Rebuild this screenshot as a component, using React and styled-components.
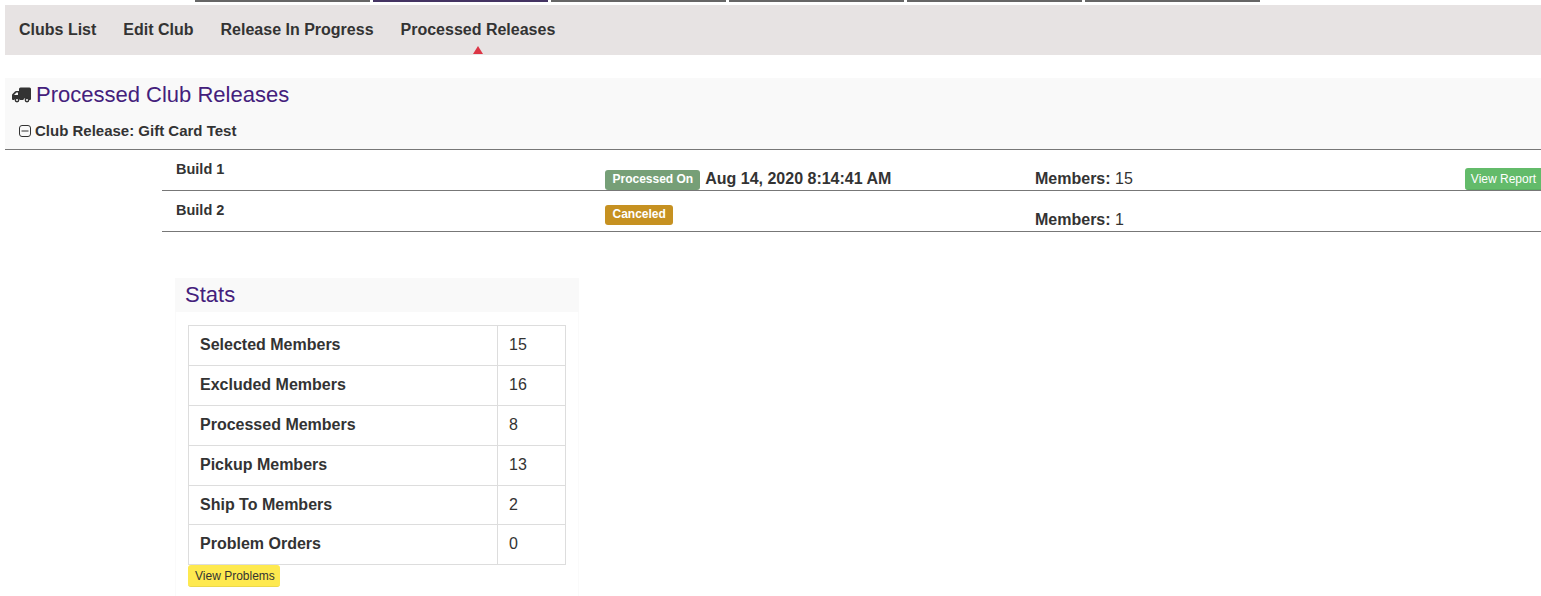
import styled, { createGlobalStyle } from "styled-components";

const tabs = [false, true, false, false, false, false];
const navItems = ["Clubs List", "Edit Club", "Release In Progress", "Processed Releases"];
const stats = [
  ["Selected Members", 15],
  ["Excluded Members", 16],
  ["Processed Members", 8],
  ["Pickup Members", 13],
  ["Ship To Members", 2],
  ["Problem Orders", 0],
];

const App = () => {
  return (
    <Page>
      <GlobalStyle />
      <TopTabs>
        {tabs.map((active, i) => (
          <TopTab key={i} $active={active} />
        ))}
      </TopTabs>

      <NavBar>
        {navItems.map((item, i) => (
          <NavItem key={item} $active={i === navItems.length - 1}>
            {item}
          </NavItem>
        ))}
      </NavBar>

      <SectionHeader>
        <SectionTitle>
          <TruckIcon viewBox="0 0 19 16">
            <path
              fill="#333"
              d="M8.5 0.5h9a1.5 1.5 0 0 1 1.5 1.5v10a1 1 0 0 1-1 1h-1.2a3 3 0 0 0-5.6 0H7.8a3 3 0 0 0-5.6 0H1a1 1 0 0 1-1-1V8.2a1.5 1.5 0 0 1 .5-1.1L3 4.4A1.5 1.5 0 0 1 4.1 4H7V2a1.5 1.5 0 0 1 1.5-1.5z"
            />
            <path fill="#f9f9f9" d="M2 8l2.4-2.4H6V8z" />
            <circle cx="5" cy="13" r="2.4" fill="#333" />
            <circle cx="5" cy="13" r="1" fill="#f9f9f9" />
            <circle cx="15" cy="13" r="2.4" fill="#333" />
            <circle cx="15" cy="13" r="1" fill="#f9f9f9" />
          </TruckIcon>
          Processed Club Releases
        </SectionTitle>
        <ReleaseTitle>
          <MinusIcon viewBox="0 0 12 12">
            <rect x="0.5" y="0.5" width="11" height="11" rx="2.5" fill="none" stroke="#333" />
            <path d="M2.5 6h7" stroke="#333" fill="none" />
          </MinusIcon>
          Club Release: Gift Card Test
        </ReleaseTitle>
      </SectionHeader>

      <Builds>
        <BuildRow>
          <BuildName>Build 1</BuildName>
          <StatusCell>
            <Badge $color="#769f77">Processed On</Badge>
            <ProcessedDate>Aug 14, 2020 8:14:41 AM</ProcessedDate>
          </StatusCell>
          <Members>
            <strong>Members:</strong> 15
          </Members>
          <ReportButton>View Report</ReportButton>
        </BuildRow>
        <BuildRow>
          <BuildName>Build 2</BuildName>
          <StatusCell>
            <Badge $color="#c69121" $raised>
              Canceled
            </Badge>
          </StatusCell>
          <Members>
            <strong>Members:</strong> 1
          </Members>
        </BuildRow>
      </Builds>

      <StatsPanel>
        <StatsTitle>Stats</StatsTitle>
        <StatsBody>
          <StatsTable>
            <tbody>
              {stats.map(([label, value]) => (
                <tr key={label}>
                  <StatLabel>{label}</StatLabel>
                  <StatValue>{value}</StatValue>
                </tr>
              ))}
            </tbody>
          </StatsTable>
          <ProblemsButton>View Problems</ProblemsButton>
        </StatsBody>
      </StatsPanel>
    </Page>
  );
};

const GlobalStyle = createGlobalStyle`
  html, body {
    margin: 0;
    padding: 0;
    background: #fff;
    overflow: hidden;
  }

  body {
    font-family: "Liberation Sans", Arial, sans-serif;
    color: #333;
  }
`;

const Page = styled.div`
  width: 1541px;
  height: 596px;
  overflow: hidden;
`;

const TopTabs = styled.div`
  display: flex;
  gap: 3px;
  height: 2px;
  padding-left: 195px;
`;

const TopTab = styled.div`
  width: 175px;
  background-color: ${(props) => (props.$active ? "#453463" : "#666")};
`;

const NavBar = styled.nav`
  margin: 3px 0 0 5px;
  height: 50px;
  background-color: #e7e3e3;
  display: flex;
  gap: 27px;
  padding-left: 14px;
`;

const NavItem = styled.div`
  position: relative;
  font-size: 16px;
  font-weight: 700;
  line-height: 50px;
  color: #333;

  ${(props) =>
    props.$active &&
    `
    &::after {
      content: "";
      position: absolute;
      left: 50%;
      bottom: 1px;
      margin-left: -5px;
      border-left: 5px solid transparent;
      border-right: 5px solid transparent;
      border-bottom: 8px solid #dc3545;
    }
  `}
`;

const SectionHeader = styled.header`
  margin: 23px 0 0 5px;
  height: 71px;
  background-color: #f9f9f9;
  border-bottom: 1px solid #777;
  padding-left: 7px;
`;

const SectionTitle = styled.h2`
  margin: 0;
  padding-top: 3px;
  font-size: 22px;
  font-weight: 400;
  line-height: 27px;
  color: #44207c;
  display: flex;
  align-items: center;
`;

const TruckIcon = styled.svg`
  width: 19px;
  height: 16px;
  margin-right: 5px;
`;

const ReleaseTitle = styled.div`
  margin-top: 14px;
  padding-left: 7px;
  font-size: 15px;
  font-weight: 700;
  line-height: 18px;
  color: #333;
  display: flex;
  align-items: center;
`;

const MinusIcon = styled.svg`
  width: 12px;
  height: 12px;
  margin-right: 4px;
`;

const Builds = styled.section`
  margin-left: 162px;
`;

const BuildRow = styled.div`
  position: relative;
  height: 40px;
  border-bottom: 1px solid #777;
  display: grid;
  grid-template-columns: 443px 430px 1fr;
  align-items: start;
`;

const BuildName = styled.div`
  padding: 11px 0 0 14px;
  font-size: 14.5px;
  font-weight: 700;
  line-height: 17px;
  color: #333;
`;

const StatusCell = styled.div`
  display: flex;
  align-items: flex-start;
  gap: 5px;
`;

const Badge = styled.span`
  margin-top: ${(props) => (props.$raised ? "14px" : "20px")};
  height: 20px;
  padding: 0 7px 0 7.5px;
  border-radius: 3px;
  background-color: ${(props) => props.$color};
  color: #fff;
  font-size: 12px;
  font-weight: 700;
  line-height: 19px;
  white-space: nowrap;
`;

const ProcessedDate = styled.span`
  margin-top: 20px;
  font-size: 16px;
  font-weight: 700;
  line-height: 18px;
  color: #333;
`;

const Members = styled.div`
  padding-top: 20px;
  font-size: 16px;
  line-height: 18px;
  color: #333;
`;

const ReportButton = styled.button`
  position: absolute;
  right: 0;
  top: 18px;
  height: 22px;
  padding: 0 5px 0 6px;
  border: none;
  border-bottom: 1px solid #5aae61;
  border-radius: 3px 0 0 3px;
  background-color: #63bb6a;
  color: #fff;
  font-family: inherit;
  font-size: 12px;
  line-height: 20px;
`;

const StatsPanel = styled.section`
  box-sizing: border-box;
  margin: 46px 0 0 175px;
  width: 404px;
  height: 320px;
  border: 1px solid #fafafa;
  border-top: none;
`;

const StatsTitle = styled.h3`
  margin: 0 -1px;
  height: 34px;
  padding-left: 11px;
  background-color: #f9f9f9;
  font-size: 22px;
  font-weight: 400;
  line-height: 33px;
  color: #44207c;
  text-indent: -1px;
`;

const StatsBody = styled.div`
  padding: 13.14px 12px 0 12px;
`;

const StatsTable = styled.table`
  width: 378px;
  border-collapse: collapse;
  table-layout: fixed;
`;

const StatLabel = styled.td`
  box-sizing: border-box;
  width: 309px;
  padding: 8px 11px;
  border: 1px solid #ddd;
  font-size: 16px;
  font-weight: 700;
  line-height: 1.42857;
  color: #333;
`;

const StatValue = styled.td`
  padding: 8px 11px;
  border: 1px solid #ddd;
  font-size: 16px;
  line-height: 1.42857;
  color: #333;
`;

const ProblemsButton = styled.button`
  display: block;
  height: 22px;
  padding: 0 5px 0 7px;
  border: none;
  border-bottom: 1px solid #ecd84a;
  border-radius: 3px;
  background-color: #fee94f;
  color: #333;
  font-family: inherit;
  font-size: 12px;
  line-height: 20px;
`;

export default App;
